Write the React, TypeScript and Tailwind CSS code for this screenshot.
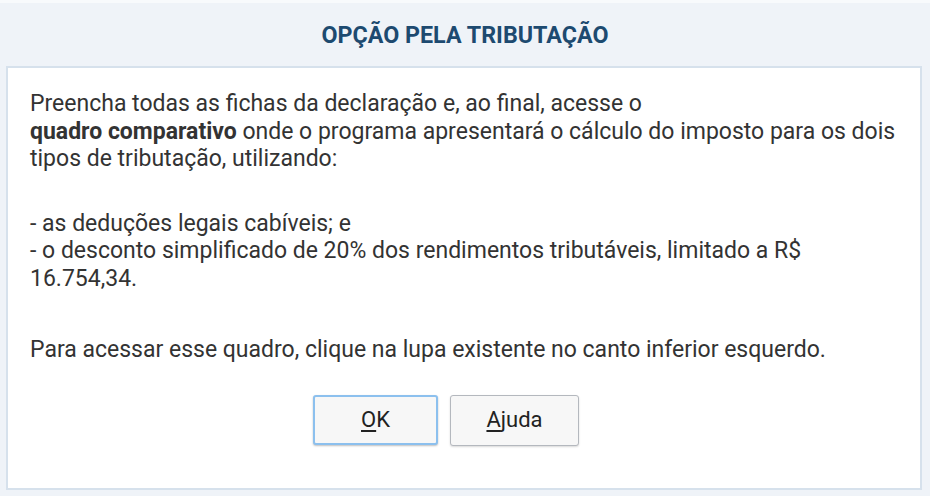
import React from "react";

export default function App() {
  return (
    <div className="w-[930px] h-[496px] bg-[#eff3f8] border-t-[3px] border-[#f8fafc] flex flex-col overflow-hidden" style={{ fontFamily: "Roboto, 'Noto Sans', sans-serif" }}>
      <div className="h-[63px] flex items-center justify-center">
        <h1 className="text-[24px] font-bold text-[#1d4a70] scale-x-[0.97] whitespace-nowrap">OPÇÃO PELA TRIBUTAÇÃO</h1>
      </div>
      <div className="ml-[6px] w-[916px] h-[424px] bg-white border-2 border-[#d6e1ec] pl-[22px] pr-[20px] pt-[22px] text-[#333333] text-[23px] leading-[27.5px]">
        <p>Preencha todas as fichas da declaração e, ao final, acesse o</p>
        <p><b className="font-bold">quadro comparativo</b> onde o programa apresentará o cálculo do imposto para os dois tipos de tributação, utilizando:</p>
        <p className="mt-[37px]">- as deduções legais cabíveis; e</p>
        <p>- o desconto simplificado de 20% dos rendimentos tributáveis, limitado a R$ 16.754,34.</p>
        <p className="mt-[44px]">Para acessar esse quadro, clique na lupa existente no canto inferior esquerdo.</p>
        <div className="mt-[31px] flex justify-center gap-[12px] pr-[38px]">
          <button className="w-[125px] h-[50px] rounded-[3px] border-2 border-[#8cc0ee] bg-[#f7f7f7] shadow-[0_1px_2px_rgba(0,0,0,0.25)] text-[22px] text-[#222]">
            <span className="underline underline-offset-[3px]">O</span>K
          </button>
          <button className="w-[129px] h-[51px] rounded-[3px] border border-[#b4b8be] bg-[#f7f7f7] shadow-[0_1px_2px_rgba(0,0,0,0.15)] text-[22px] text-[#222]">
            <span className="underline underline-offset-[3px]">A</span>juda
          </button>
        </div>
      </div>
    </div>
  );
}
